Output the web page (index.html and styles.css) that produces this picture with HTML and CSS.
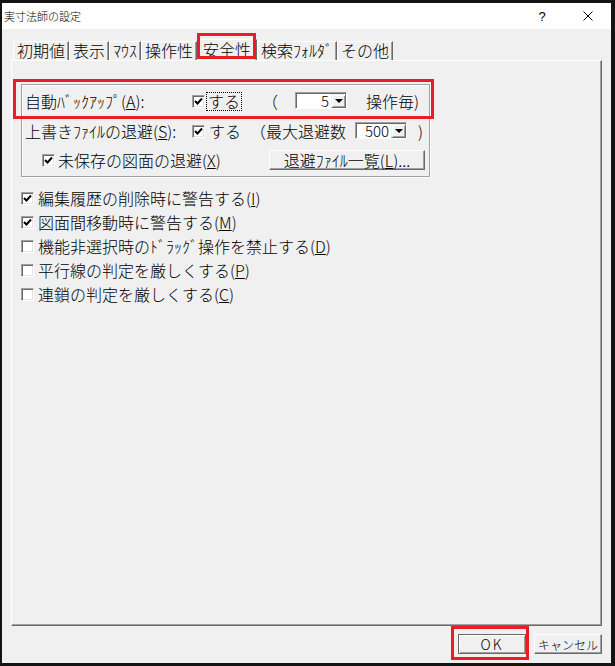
FILE: index.html
```html
<!DOCTYPE html>
<html lang="ja">
<head>
  <meta charset="UTF-8" />
  <title>実寸法師の設定</title>
  <link rel="stylesheet" href="styles.css">
</head>
<body>

  <div class="window">

    <!-- タイトルバー -->
    <div class="titlebar">
      <span class="title">実寸法師の設定</span>
      <span class="cap-btn help">?</span>
      <span class="cap-btn">
        <svg width="10" height="10" viewBox="0 0 10 10"><path d="M0.5 0.5L9.5 9.5M9.5 0.5L0.5 9.5" stroke="#000" stroke-width="1"/></svg>
      </span>
    </div>

    <div class="client">

      <!-- タブ -->
      <div class="tabs">
        <div class="tab">初期値</div>
        <div class="tab">表示</div>
        <div class="tab">ﾏｳｽ</div>
        <div class="tab">操作性</div>
        <div class="tab selected">安全性</div>
        <div class="tab">検索ﾌｫﾙﾀﾞ</div>
        <div class="tab">その他</div>
      </div>

      <div class="panel">

        <!-- バックアップ設定 -->
        <div class="group">
          <div class="row row-backup">
            <span class="label">自動ﾊﾞｯｸｱｯﾌﾟ(<u>A</u>):</span>
            <span class="check"><svg width="9" height="9" viewBox="0 0 9 9"><path d="M1 4L3.5 6.5L8 1.5" fill="none" stroke="#000" stroke-width="2"/></svg></span>
            <span class="focus">する</span>
            <span class="paren-open">（</span>
            <div class="combo combo-count"><span class="value">5</span><span class="drop"></span></div>
            <span class="tail">操作毎)</span>
          </div>

          <div class="row">
            <span class="label">上書きﾌｧｲﾙの退避(<u>S</u>):</span>
            <span class="check"><svg width="9" height="9" viewBox="0 0 9 9"><path d="M1 4L3.5 6.5L8 1.5" fill="none" stroke="#000" stroke-width="2"/></svg></span>
            <span class="yes">する</span>
            <span class="max">（最大退避数</span>
            <div class="combo combo-max"><span class="value">500</span><span class="drop"></span></div>
            <span class="paren-close">)</span>
          </div>

          <div class="row">
            <span class="check indent"><svg width="9" height="9" viewBox="0 0 9 9"><path d="M1 4L3.5 6.5L8 1.5" fill="none" stroke="#000" stroke-width="2"/></svg></span>
            <span class="text">未保存の図面の退避(<u>X</u>)</span>
            <span class="btn btn-list">退避ﾌｧｲﾙ一覧(<u>L</u>)...</span>
          </div>
        </div>

        <!-- その他のチェック -->
        <div class="checks">
          <div class="check-row">
            <span class="check"><svg width="9" height="9" viewBox="0 0 9 9"><path d="M1 4L3.5 6.5L8 1.5" fill="none" stroke="#000" stroke-width="2"/></svg></span>
            <span class="text">編集履歴の削除時に警告する(<u>I</u>)</span>
          </div>
          <div class="check-row">
            <span class="check"><svg width="9" height="9" viewBox="0 0 9 9"><path d="M1 4L3.5 6.5L8 1.5" fill="none" stroke="#000" stroke-width="2"/></svg></span>
            <span class="text">図面間移動時に警告する(<u>M</u>)</span>
          </div>
          <div class="check-row">
            <span class="check"></span>
            <span class="text">機能非選択時のﾄﾞﾗｯｸﾞ操作を禁止する(<u>D</u>)</span>
          </div>
          <div class="check-row">
            <span class="check"></span>
            <span class="text">平行線の判定を厳しくする(<u>P</u>)</span>
          </div>
          <div class="check-row">
            <span class="check"></span>
            <span class="text">連鎖の判定を厳しくする(<u>C</u>)</span>
          </div>
        </div>

      </div>

      <!-- ボタン -->
      <div class="buttons">
        <span class="btn btn-ok">OK</span>
        <span class="btn">キャンセル</span>
      </div>

    </div>
  </div>

</body>
</html>
```

FILE: styles.css
```css
body {
  margin: 0;
  background-color: #141414;
  font-family: "Noto Sans CJK JP", sans-serif;
  font-size: 16px;
  font-weight: 300;
  color: #000;
}

.window {
  box-sizing: border-box;
  width: 615px;
  height: 666px;
  border-style: solid;
  border-color: #141414;
  border-width: 3px 4px 3px 2px;
  background-color: #f0f0f0;
  display: flex;
  flex-direction: column;
}

/* title bar */
.titlebar {
  height: 26px;
  background-color: #fff;
  display: flex;
  align-items: center;
}

.title {
  flex: 1;
  padding-left: 2px;
  font-size: 11px;
  line-height: 13px;
}

.cap-btn {
  width: 46px;
  height: 26px;
  display: flex;
  align-items: center;
  justify-content: center;
}

.help {
  font-family: "Liberation Sans", sans-serif;
  font-size: 13px;
}

.client {
  flex: 1;
  padding: 12px 9px 0 9px;
}

/* tabs */
.tabs {
  display: flex;
  align-items: flex-end;
  height: 19px;
  margin-left: 2px;
}

.tab {
  box-sizing: border-box;
  height: 19px;
  padding: 0 3px;
  border-top: 1px solid #fff;
  border-left: 1px solid #fff;
  border-right: 1px solid #696969;
  box-shadow: inset -1px 0 0 #a0a0a0;
  line-height: 17px;
  white-space: nowrap;
}

.tab.selected {
  position: relative;
  height: 21px;
  padding: 0 5px;
  line-height: 19px;
}

.tab.selected::after,
.row-backup::after,
.btn-ok::after {
  content: "";
  position: absolute;
  border: 3px solid #ec1c24;
}

.tab.selected::after {
  left: -1px;
  right: 0;
  top: -7px;
  bottom: 1px;
}

/* panel */
.panel {
  box-sizing: border-box;
  height: 566px;
  padding: 23px 0 0 9px;
  border-top: 1px solid #fff;
  border-left: 1px solid #fff;
  border-right: 1px solid #696969;
  border-bottom: 1px solid #696969;
  box-shadow: inset -1px -1px 0 #a0a0a0;
}

.group {
  box-sizing: border-box;
  width: 409px;
  padding: 1px 0 2px 0;
  border: 1px solid #a0a0a0;
  box-shadow: inset 1px 1px 0 #fff, 1px 1px 0 #fff;
}

.row {
  display: flex;
  align-items: center;
  height: 30px;
  white-space: nowrap;
}

.row:last-child {
  height: 28px;
}

.row-backup {
  position: relative;
}

.row-backup::after {
  left: -9px;
  right: -5px;
  top: -7px;
  bottom: -3px;
}

.label {
  box-sizing: border-box;
  width: 170px;
  padding-left: 3px;
}

.check {
  box-sizing: border-box;
  width: 13px;
  height: 13px;
  flex-shrink: 0;
  background-color: #fff;
  border: 1px solid;
  border-color: #a0a0a0 #fff #fff #a0a0a0;
  box-shadow: inset 1px 1px 0 #696969, inset -1px -1px 0 #e3e3e3;
  display: flex;
  align-items: center;
  justify-content: center;
}

.check svg {
  display: block;
}

.focus {
  margin-left: 2px;
  padding: 0 1px;
  line-height: 17px;
  outline: 1px dotted #000;
}

.paren-open {
  margin-left: 21px;
}

.combo {
  box-sizing: border-box;
  width: 52px;
  height: 17px;
  margin-bottom: 2px;
  display: flex;
  background-color: #fff;
  border: 1px solid;
  border-color: #a0a0a0 #fff #fff #a0a0a0;
  box-shadow: inset 1px 1px 0 #696969;
  padding: 1px 0 0 1px;
}

.combo-count {
  margin-left: 17px;
}

.combo-max {
  margin-left: 9px;
}

.combo .value {
  flex: 1;
  text-align: right;
  padding-right: 2px;
  font-size: 15px;
  line-height: 14px;
}

.drop {
  box-sizing: border-box;
  width: 15px;
  background-color: #f0f0f0;
  border: 1px solid;
  border-color: #f0f0f0 #696969 #696969 #f0f0f0;
  box-shadow: inset 1px 1px 0 #fff, inset -1px -1px 0 #a0a0a0;
  display: flex;
  align-items: center;
  justify-content: center;
}

.drop::before {
  content: "";
  border-left: 4px solid transparent;
  border-right: 4px solid transparent;
  border-top: 4px solid #000;
}

.tail {
  margin-left: 19px;
}

.yes {
  margin-left: 4px;
}

.max {
  margin-left: 9px;
}

.paren-close {
  margin-left: 11px;
}

.indent {
  margin-left: 20px;
}

.row .text {
  margin-left: 3px;
}

/* buttons */
.btn {
  box-sizing: border-box;
  height: 20px;
  display: flex;
  align-items: center;
  justify-content: center;
  background-color: #f0f0f0;
  border: 1px solid;
  border-color: #fff #696969 #696969 #fff;
  box-shadow: inset -1px -1px 0 #a0a0a0;
  white-space: nowrap;
}

.btn-list {
  width: 156px;
  margin-left: auto;
  margin-right: 4px;
  line-height: 18px;
}

.checks {
  margin-top: 9px;
}

.check-row {
  display: flex;
  align-items: center;
  height: 24px;
  white-space: nowrap;
}

.check-row .text {
  margin-left: 4px;
}

.buttons {
  display: flex;
  justify-content: flex-end;
  gap: 8px;
  margin-top: 8px;
}

.buttons .btn {
  width: 68px;
  font-size: 12px;
}

.buttons .btn-ok {
  position: relative;
  font-size: 14px;
  border-color: #696969;
  box-shadow: inset 1px 1px 0 #fff, inset -1px -1px 0 #a0a0a0;
  letter-spacing: 2px;
}

.btn-ok::after {
  left: -8px;
  right: -4px;
  top: -9px;
  bottom: -7px;
}
```
